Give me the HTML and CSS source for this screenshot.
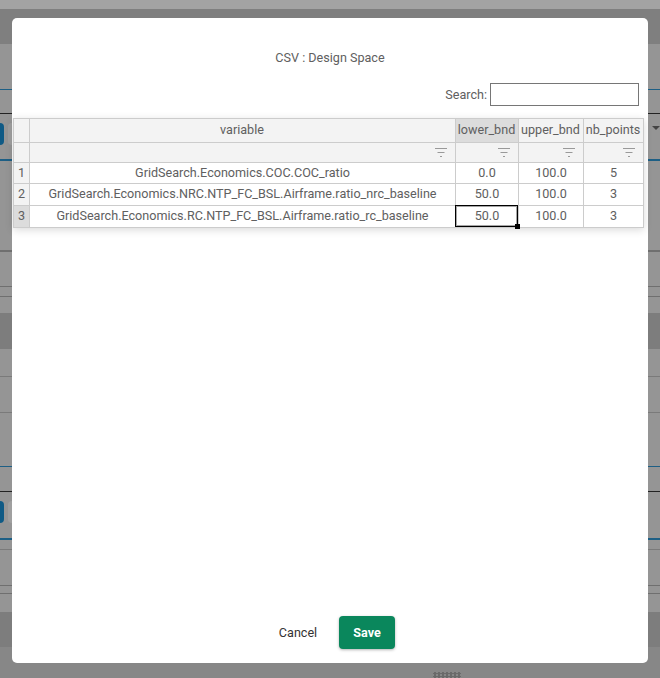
FILE: index.html
```html
<!DOCTYPE html>
<html lang="en">
<head>
    <meta charset="UTF-8">
    <meta name="viewport" content="width=device-width, initial-scale=1.0">
    <title>CSV : Design Space</title>
    <link rel="stylesheet" href="styles.css">
</head>
<body>
    <div class="backdrop">
        <div class="band band-top"></div>
        <div class="band band-head"></div>
        <div class="band band-tab"></div>
        <div class="band band-tool">
            <div class="tool-left">
                <span class="tool-btn"></span>
                <span class="tool-ghost"></span>
            </div>
            <span class="tool-arrow"></span>
        </div>
        <div class="band band-a"></div>
        <div class="band band-b"></div>
        <div class="band band-c"></div>
        <div class="band band-gap"></div>
        <div class="band band-dark"></div>
        <div class="band band-d"></div>
        <div class="band band-e"></div>
        <div class="band band-f"></div>
        <div class="band band-tool2">
            <div class="tool-left">
                <span class="tool-btn"></span>
                <span class="tool-ghost"></span>
            </div>
        </div>
        <div class="band band-g"></div>
        <div class="band band-h"></div>
        <div class="band band-i"></div>
        <div class="band band-gap2"></div>
        <div class="band band-dark2"></div>
        <div class="band band-foot">
            <span class="grip"></span>
        </div>
    </div>

    <div class="modal">
        <h1 class="modal-title">CSV : Design Space</h1>
        <div class="search-row">
            <label for="search">Search:</label>
            <input type="text" id="search">
        </div>
        <div class="grid-wrap">
            <table class="grid">
                <colgroup>
                    <col class="col-row">
                    <col class="col-var">
                    <col class="col-low">
                    <col class="col-up">
                    <col class="col-nb">
                </colgroup>
                <thead>
                    <tr class="head-row">
                        <th></th>
                        <th>variable</th>
                        <th class="active-head">lower_bnd</th>
                        <th>upper_bnd</th>
                        <th>nb_points</th>
                    </tr>
                    <tr class="filter-row">
                        <th></th>
                        <th><svg class="filter" viewBox="0 0 12 9"><path d="M0 .5h12M2.500 4.500h7M5 8.500h2"/></svg></th>
                        <th><svg class="filter" viewBox="0 0 12 9"><path d="M0 .5h12M2.500 4.500h7M5 8.500h2"/></svg></th>
                        <th><svg class="filter" viewBox="0 0 12 9"><path d="M0 .5h12M2.500 4.500h7M5 8.500h2"/></svg></th>
                        <th><svg class="filter" viewBox="0 0 12 9"><path d="M0 .5h12M2.500 4.500h7M5 8.500h2"/></svg></th>
                    </tr>
                </thead>
                <tbody>
                    <tr class="row-1">
                        <th>1</th>
                        <td>GridSearch.Economics.COC.COC_ratio</td>
                        <td>0.0</td>
                        <td>100.0</td>
                        <td>5</td>
                    </tr>
                    <tr>
                        <th>2</th>
                        <td>GridSearch.Economics.NRC.NTP_FC_BSL.Airframe.ratio_nrc_baseline</td>
                        <td>50.0</td>
                        <td>100.0</td>
                        <td>3</td>
                    </tr>
                    <tr>
                        <th class="active-head">3</th>
                        <td>GridSearch.Economics.RC.NTP_FC_BSL.Airframe.ratio_rc_baseline</td>
                        <td class="selected">50.0<span class="handle"></span></td>
                        <td>100.0</td>
                        <td>3</td>
                    </tr>
                </tbody>
            </table>
        </div>
        <div class="modal-actions">
            <button class="btn-cancel" type="button">Cancel</button>
            <button class="btn-save" type="button">Save</button>
        </div>
    </div>
</body>
</html>
```

FILE: styles.css
```css
html, body {
    margin: 0;
    padding: 0;
    height: 100%;
    overflow: hidden;
}
body {
    font-family: Roboto, "Liberation Sans", sans-serif;
    font-size: 12.6px;
    color: #606060;
    background-color: #959595;
}

/* dimmed page behind the dialog */
.backdrop {
    display: flex;
    flex-direction: column;
    height: 678px;
}
.band {
    box-sizing: border-box;
    flex: none;
    background-color: #959595;
}
.band-top { height: 9px; background-color: #a3a3a3; }
.band-head { height: 35px; background-color: #7f7f7f; }
.band-tab { height: 46px; border-bottom: 1px solid #1d5f85; }
.band-tool {
    height: 71px;
    padding-top: 33px;
    border-bottom: 2px solid #1d5f85;
    display: flex;
    justify-content: space-between;
    position: relative;
}
.band-tool::before {
    content: "";
    position: absolute;
    left: 0;
    right: 0;
    top: 23px;
    height: 1px;
    background-color: #222;
}
.band-a { height: 91px; border-bottom: 2px solid #6f6f6f; }
.band-b { height: 35px; border-bottom: 1px solid #6f6f6f; }
.band-c { height: 10px; border-bottom: 1px solid #6f6f6f; }
.band-gap { height: 16px; }
.band-dark { height: 36px; background-color: #7d7d7d; }
.band-d { height: 28px; border-bottom: 1px solid #7a7a7a; }
.band-e { height: 36px; border-bottom: 1px solid #7a7a7a; }
.band-f { height: 54px; border-bottom: 1px solid #1d5f85; }
.band-tool2 {
    height: 73px;
    padding-top: 34px;
    border-bottom: 2px solid #1d5f85;
    position: relative;
}
.band-tool2::before {
    content: "";
    position: absolute;
    left: 0;
    right: 0;
    top: 24px;
    height: 1px;
    background-color: #222;
}
.band-g { height: 10px; border-bottom: 1px solid #7a7a7a; }
.band-h { height: 36px; border-bottom: 1px solid #6f6f6f; }
.band-i { height: 8px; border-bottom: 1px solid #6f6f6f; }
.band-gap2 { height: 18px; }
.band-dark2 { height: 35px; background-color: #7d7d7d; }
.band-foot {
    flex: 1;
    padding: 25px 199px 0 0;
    background-color: #878787;
    display: flex;
    justify-content: flex-end;
    align-items: flex-start;
}

.tool-left {
    display: flex;
    gap: 4px;
}
.tool-btn {
    display: block;
    width: 4px;
    height: 22px;
    border-radius: 0 4px 4px 0;
    background-color: #0f5a85;
}
.tool-ghost {
    display: block;
    width: 12px;
    height: 22px;
    border-radius: 4px 0 0 4px;
    background-color: #a0a0a0;
}
.tool-arrow {
    width: 0;
    height: 0;
    margin: 3px 0 0;
    border-left: 4px solid transparent;
    border-right: 4px solid transparent;
    border-top: 4px solid #444;
}
.grip {
    width: 28px;
    height: 6px;
    background-image: radial-gradient(#6a6a6a 1.5px, transparent 1.5px);
    background-size: 4px 3px;
}

/* dialog */
.modal {
    position: absolute;
    left: 12px;
    top: 18px;
    width: 636px;
    height: 645px;
    display: flex;
    flex-direction: column;
    background-color: #fff;
    border-radius: 5px;
}
.modal-title {
    margin: 33px 0 0;
    height: 14px;
    line-height: 14px;
    font-size: 12.6px;
    font-weight: 400;
    text-align: center;
}
.search-row {
    display: flex;
    justify-content: flex-end;
    align-items: center;
    gap: 3px;
    margin: 18px 9px 0 0;
}
.search-row input {
    box-sizing: border-box;
    width: 149px;
    height: 23px;
    margin: 0;
    padding: 0 2px;
    border: 1px solid #767676;
    border-radius: 0;
    outline: none;
}

.grid-wrap {
    margin: 12px 0 0 1px;
    width: 631px;
    box-shadow: 0 2px 8px rgba(0, 0, 0, 0.15);
}
.grid {
    width: 630px;
    border-collapse: collapse;
    table-layout: fixed;
    border: 1px solid #ccc;
}
.col-row { width: 16px; }
.col-var { width: 426px; }
.col-low { width: 63px; }
.col-up { width: 65px; }
.col-nb { width: 60px; }
.grid th, .grid td {
    box-sizing: border-box;
    padding: 0 0 2px;
    border: 1px solid #ccc;
    font-size: 12.6px;
    font-weight: 400;
    text-align: center;
    white-space: nowrap;
    overflow: visible;
    color: #606060;
}
.grid th {
    background-color: #f3f3f3;
}
.grid .active-head {
    background-color: #dcdcdc;
}
.head-row th { height: 24px; padding-right: 1px; }
.filter-row th {
    height: 20px;
    text-align: right;
    padding: 0 8px 0 0;
    line-height: 0;
}
.grid tbody tr { height: 22px; }
.grid .row-1 { height: 21px; }
.filter {
    width: 12px;
    height: 9px;
}
.filter path {
    fill: none;
    stroke: #999;
    stroke-width: 1;
}
.grid .selected {
    position: relative;
}
.grid .selected::after {
    content: "";
    position: absolute;
    left: -1px;
    top: -1px;
    right: 0;
    bottom: 0;
    border: 1px solid #000;
    box-shadow: inset 0 0 0 1px rgba(0, 0, 0, 0.35);
}
.handle {
    position: absolute;
    right: -2px;
    bottom: -2px;
    z-index: 1;
    width: 5px;
    height: 5px;
    background-color: #000;
}

.modal-actions {
    display: flex;
    justify-content: center;
    align-items: center;
    gap: 8px;
    margin-top: auto;
    margin-bottom: 14px;
}
.modal-actions button {
    height: 33px;
    padding: 0 0 1px;
    border: none;
    border-radius: 4px;
    font-family: inherit;
    font-size: 12.6px;
    font-weight: 400;
    cursor: pointer;
}
.btn-cancel {
    width: 66px;
    background: none;
    color: #333;
}
.modal-actions .btn-save {
    width: 56px;
    background-color: #0a875c;
    color: #fff;
    font-weight: 700;
    box-shadow: 0 1px 3px rgba(0, 0, 0, 0.3);
}
```
